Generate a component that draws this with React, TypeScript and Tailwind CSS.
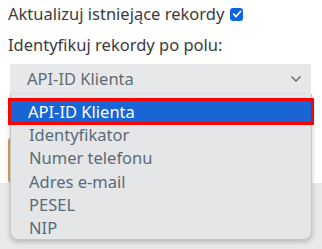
const options = [
  "API-ID Klienta",
  "Identyfikator",
  "Numer telefonu",
  "Adres e-mail",
  "PESEL",
  "NIP",
];

function CheckBox() {
  return (
    <span className="ml-[6px] inline-flex h-[13px] w-[13px] items-center justify-center rounded-[3px] bg-[#0b64e6]">
      <svg width="10" height="10" viewBox="0 0 10 10" fill="none">
        <path d="M1.6 5.2 4 7.5 8.5 2.5" stroke="white" strokeWidth="1.8" strokeLinecap="round" strokeLinejoin="round" />
      </svg>
    </span>
  );
}

export default function App() {
  return (
    <div className="relative h-[249px] w-[322px] overflow-hidden bg-white font-['Noto_Sans',sans-serif]">
      <div className="flex flex-col px-[8px] pt-[3px]">
        <label className="flex h-[22px] items-center text-[16.5px] text-[#3b3b3b]">
          Aktualizuj istniejące rekordy
          <CheckBox />
        </label>
        <div className="mt-[9px] flex h-[22px] items-center text-[16.5px] text-[#3b3b3b]">
          Identyfikuj rekordy po polu:
        </div>
        <div className="mt-[8px] ml-[2px] flex h-[30px] w-[301px] items-center justify-between bg-[#e6e8ea] pl-[17px] pr-[9px] text-[16.5px] text-[#5f6b75]">
          <span>API-ID Klienta</span>
          <svg width="12" height="8" viewBox="0 0 12 8" fill="none">
            <path d="M1.5 1.5 6 6 10.5 1.5" stroke="#5f6b75" strokeWidth="1.4" />
          </svg>
        </div>
        <div className="mt-[44px] h-[45px] w-[120px] rounded-l-[3px] border-l-2 border-[#d9a35a] bg-white" />
      </div>
      <div className="h-[70px] bg-[#e9e9e9]" />

      <div className="absolute left-[10px] top-[94px] w-[302px] rounded-b-[8px] border border-t-0 border-[#c4c6c8] bg-[#e4e6e8] pt-[7px] shadow-[0_2px_5px_rgba(0,0,0,0.22)]">
        {options.map((o, i) =>
          i === 0 ? (
            <div key={o} className="h-[21px] bg-[#1a65d6] pl-[17px] text-[16.5px] leading-[21px] text-white outline-[3px] outline-solid outline-[#ff0000]">
              {o}
            </div>
          ) : (
            <div key={o} className={`pl-[18px] text-[16.5px] leading-[23.3px] text-[#5b6a78] ${i === 1 ? "pt-[1px]" : ""}`}>
              {o}
            </div>
          )
        )}
      </div>
    </div>
  );
}
